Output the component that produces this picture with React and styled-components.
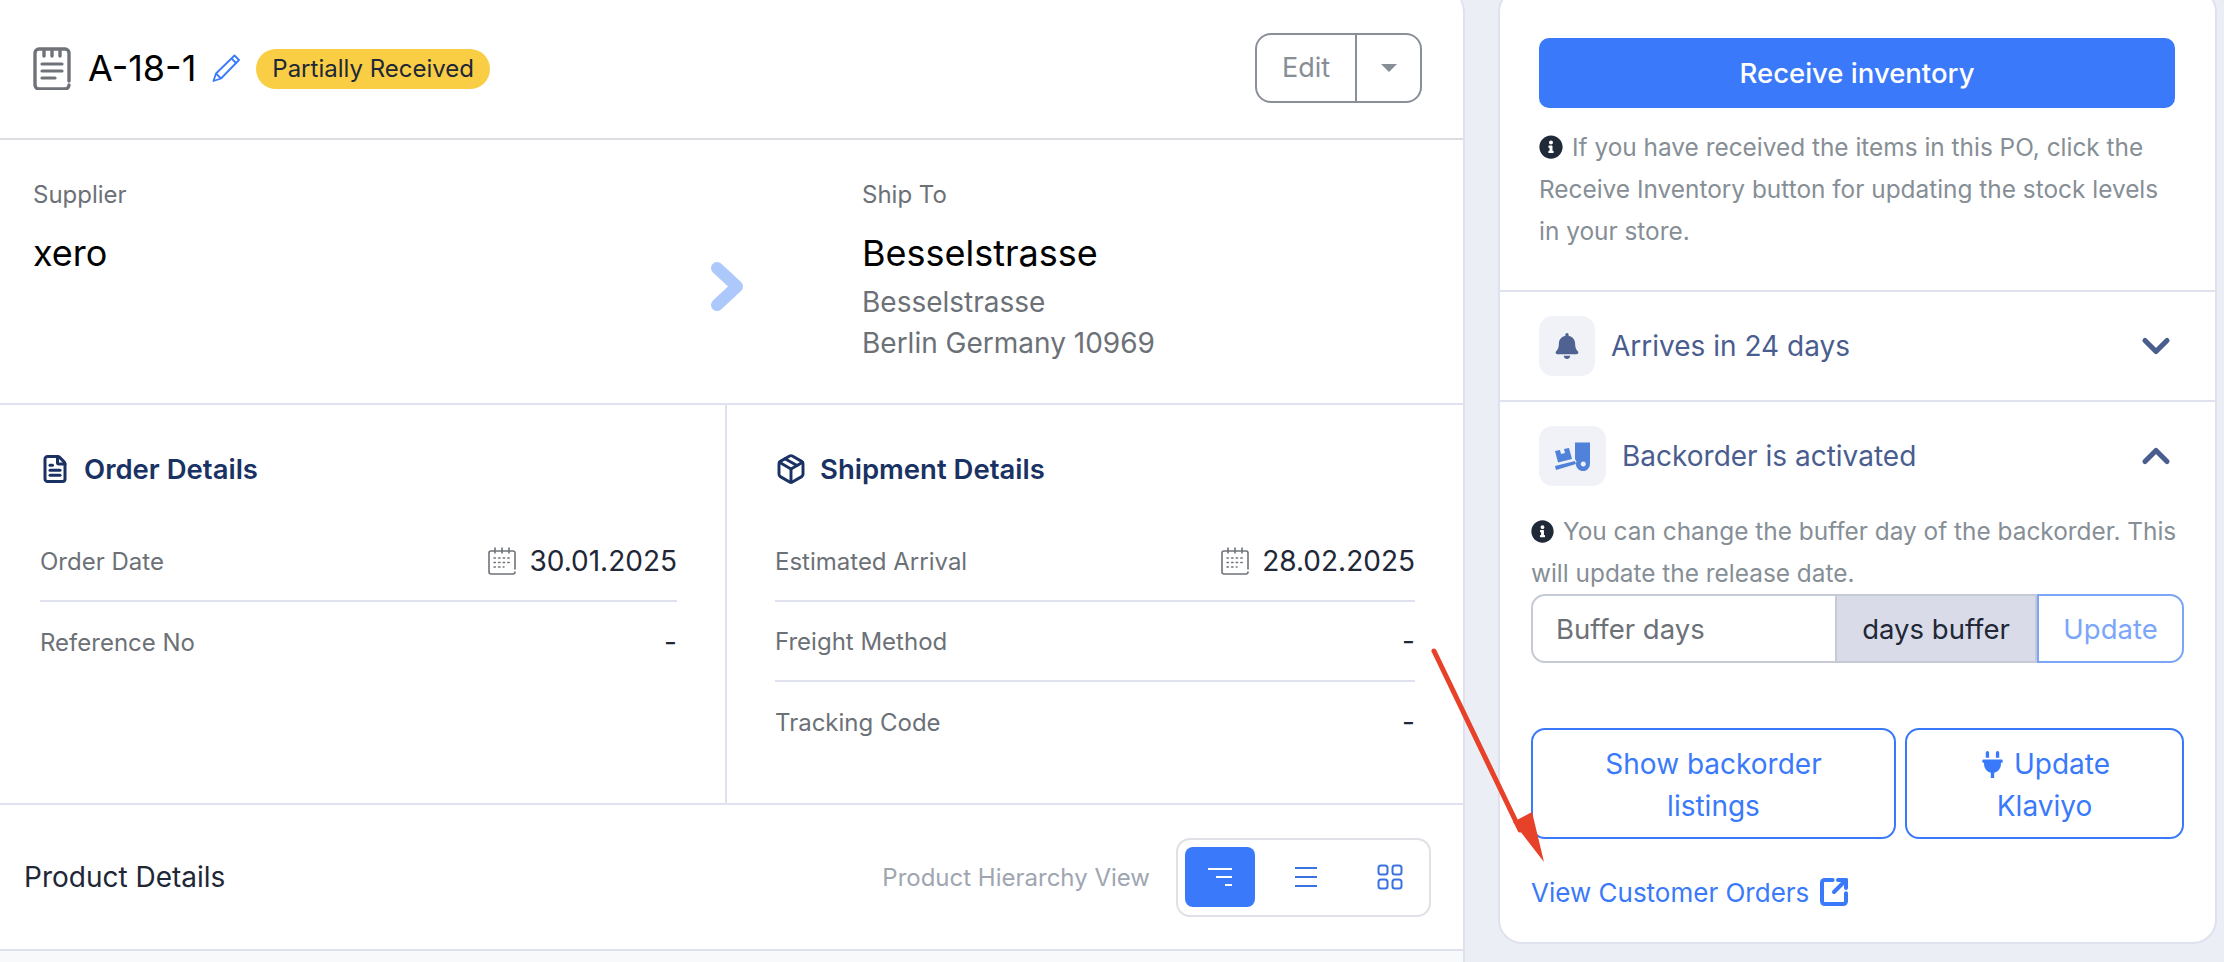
import React from 'react'
import styled, { createGlobalStyle } from 'styled-components'
import { ChevronDown, ChevronUp, FileText, Package, SquareArrowOutUpRight } from 'lucide-react'
import { FaBell, FaInfoCircle, FaPlug } from 'react-icons/fa'

const GlobalStyle = createGlobalStyle`
  html, body { margin: 0; padding: 0; background: #eceef5; }
  * { box-sizing: border-box; }
  body { font-family: Inter, "Liberation Sans", sans-serif; }
`

const Page = styled.div`
  position: relative;
  width: 2224px;
  height: 962px;
  overflow: hidden;
`

const Columns = styled.div`
  display: flex;
  align-items: flex-start;
  gap: 33px;
  margin-top: -12px;
`

const MainCard = styled.section`
  width: 1465px;
  height: 1000px;
  background: #fff;
  border-right: 2px solid #dfe2ee;
  border-top-right-radius: 24px;
`

const Header = styled.header`
  display: flex;
  align-items: center;
  justify-content: space-between;
  height: 152px;
  padding: 9px 41px 0 33px;
  border-bottom: 2px solid #dcdde1;
`

const TitleGroup = styled.div`
  display: flex;
  align-items: center;
`

const Title = styled.h1`
  margin: 0 16px 0 17px;
  font-size: 36px;
  line-height: 44px;
  font-weight: 400;
  color: #000;
`

const Badge = styled.span`
  display: flex;
  align-items: center;
  height: 40px;
  margin: 2px 0 0 16px;
  padding: 0 16px;
  border-radius: 20px;
  background: #f9ce45;
  color: #212736;
  font-size: 24px;
`

const SplitButton = styled.div`
  display: flex;
  width: 167px;
  height: 70px;
  border: 2px solid #8a9099;
  border-radius: 16px;
  color: #868e96;
`

const EditLabel = styled.span`
  display: flex;
  align-items: center;
  justify-content: center;
  width: 100px;
  border-right: 2px solid #8a9099;
  font-size: 27px;
`

const Caret = styled.span`
  flex: 1;
  display: flex;
  align-items: center;
  justify-content: center;
  &::after {
    content: '';
    border-left: 8px solid transparent;
    border-right: 8px solid transparent;
    border-top: 8px solid #868e96;
  }
`

const Parties = styled.div`
  display: grid;
  grid-template-columns: 677px 34px 1fr;
  height: 265px;
  padding: 41px 0 0 33px;
  border-bottom: 2px solid #dfe2ee;
`

const PartyColumn = styled.div`
  padding-left: ${p => p.$inset || 0}px;
`

const PartyLabel = styled.div`
  font-size: 24px;
  line-height: 28px;
  color: #6c7177;
`

const PartyName = styled.div`
  margin: 24px 0 9px;
  font-size: 36px;
  line-height: 40px;
  color: #000;
`

const PartyLine = styled.div`
  font-size: 28px;
  line-height: 41px;
  color: #6c7177;
`

const ArrowMark = styled.svg`
  margin-top: 80px;
  width: 34px;
  height: 51px;
`

const Details = styled.div`
  display: grid;
  grid-template-columns: 727px 1fr;
  height: 400px;
  border-bottom: 2px solid #dfe2ee;
`

const DetailColumn = styled.div`
  padding: 47px ${p => p.$right}px 0 ${p => p.$left}px;
  border-right: ${p => (p.$divided ? '2px solid #dfe2ee' : 'none')};
`

const DetailHeading = styled.h2`
  display: flex;
  align-items: center;
  gap: ${p => p.$gap}px;
  height: 34px;
  margin: 0 0 36px;
  font-size: 27.500px;
  font-weight: 600;
  color: #1a3263;
`

const DetailRow = styled.div`
  display: flex;
  align-items: center;
  justify-content: space-between;
  height: 80px;
  border-bottom: ${p => (p.$last ? 'none' : '2px solid #dfe2ee')};
`

const RowLabel = styled.span`
  font-size: 24px;
  color: #6c7177;
`

const RowValue = styled.span`
  display: flex;
  align-items: center;
  gap: 13px;
  font-size: 28px;
  color: #212736;
`

const ProductBar = styled.div`
  display: flex;
  align-items: center;
  justify-content: space-between;
  height: 146px;
  padding: 0 32px 0 24px;
  border-bottom: 2px solid #dfe2ee;
`

const ProductTitle = styled.span`
  font-size: 28px;
  color: #212736;
`

const ViewControls = styled.div`
  display: flex;
  align-items: center;
  gap: 26px;
`

const ViewLabel = styled.span`
  font-size: 24px;
  color: #a0a6b1;
`

const ViewToggle = styled.div`
  display: flex;
  align-items: center;
  gap: 14px;
  height: 79px;
  padding: 0 6px 0 7px;
  border: 2px solid #dfe1e6;
  border-radius: 14px;
`

const ViewOption = styled.span`
  display: flex;
  align-items: center;
  justify-content: center;
  width: ${p => p.$width}px;
  height: 60px;
  border-radius: 8px;
  background: ${p => (p.$active ? '#3a7afa' : 'transparent')};
  color: ${p => (p.$active ? '#fff' : '#3a72e0')};
`

const ProductFooter = styled.div`
  height: 40px;
  background: #f8f9fb;
`

const SideCard = styled.aside`
  width: 719px;
  height: 956px;
  background: #fff;
  border: 2px solid #dfe2ee;
  border-radius: 24px;
  overflow: hidden;
`

const ReceiveSection = styled.div`
  padding: 48px 40px 38px 39px;
  border-bottom: 2px solid #dfe2ee;
`

const PrimaryButton = styled.div`
  display: flex;
  align-items: center;
  justify-content: center;
  height: 70px;
  margin-bottom: 18px;
  border-radius: 10px;
  background: #3a7afa;
  color: #fff;
  font-size: 27.500px;
  font-weight: 500;
`

const InfoText = styled.p`
  margin: 0;
  font-size: 24.400px;
  line-height: 42px;
  color: #868e96;
  svg {
    margin-right: 9px;
    vertical-align: -3px;
    color: #1f2937;
  }
`

const AccordionHeader = styled.div`
  display: flex;
  align-items: center;
  padding: 24px 37px 24px ${p => p.$inset}px;
  border-bottom: ${p => (p.$divided ? '2px solid #dfe2ee' : 'none')};
`

const AccordionTile = styled.span`
  display: flex;
  align-items: center;
  justify-content: center;
  width: ${p => p.$width}px;
  height: 60px;
  margin-right: 16px;
  border-radius: 14px;
  background: #f0f2f7;
  color: #4f6291;
`

const AccordionTitle = styled.span`
  flex: 1;
  font-size: 28px;
  color: #4a5d8f;
`

const BackorderBody = styled.div`
  padding: 0 31px 33px;
`

const BufferGroup = styled.div`
  display: grid;
  grid-template-columns: 306px 200px 1fr;
  height: 69px;
  margin: 0 0 65px;
  font-size: 27.500px;
`

const BufferCell = styled.div`
  display: flex;
  align-items: center;
  justify-content: ${p => (p.$center ? 'center' : 'flex-start')};
  padding-left: ${p => (p.$center ? 0 : 23)}px;
  border: 2px solid ${p => p.$border};
  border-left-width: ${p => (p.$noLeft ? 0 : 2)}px;
  border-radius: ${p => p.$radius};
  background: ${p => p.$bg};
  color: ${p => p.$color};
`

const ActionRow = styled.div`
  display: grid;
  grid-template-columns: 365px 279px;
  gap: 9px;
  margin-bottom: 36px;
`

const OutlineButton = styled.div`
  height: 111px;
  padding-top: 13px;
  border: 2px solid #3a7afa;
  border-radius: 14px;
  color: #3a7afa;
  font-size: 28px;
  line-height: 42px;
  text-align: center;
  svg { vertical-align: -4px; margin-right: 8px; }
`

const CustomerLink = styled.div`
  display: flex;
  align-items: center;
  gap: 9px;
  height: 34px;
  color: #3a7afa;
  font-size: 26px;
`

const AnnotationArrow = styled.svg`
  position: absolute;
  left: 1420px;
  top: 640px;
  width: 140px;
  height: 235px;
`

const NotepadIcon = () => (
  <svg width="38" height="44" viewBox="0 0 38 44" fill="none" stroke="#6f7379" strokeWidth="3.4" strokeLinecap="round">
    <path d="M36 35V7a4 4 0 0 0-4-4H6a4 4 0 0 0-4 4v32a4 4 0 0 0 4 4h26a4 4 0 0 0 4-4" />
    <path d="M11 5v5M19 5v5M27 5v5" strokeWidth="3.4" />
    <path d="M9 18h20M9 25h20M9 32h13" strokeWidth="3.2" />
  </svg>
)

const PencilIcon = () => (
  <svg width="28" height="28" viewBox="0 0 28 28" fill="none" stroke="#3a7afa" strokeWidth="1.8" strokeLinejoin="round">
    <path d="M22.500 1.500 27 6 9 24.500 1.500 27 4 19.500z" />
    <path d="M19.500 4.500 24 9M4 19.500 9 24.500" />
  </svg>
)

const CalendarIcon = () => (
  <svg width="28" height="28" viewBox="0 0 28 28" fill="none" stroke="#6f7379" strokeWidth="1.6" strokeLinecap="round">
    <path d="M27 22V6a2 2 0 0 0-2-2H3a2 2 0 0 0-2 2v19a2 2 0 0 0 2 2h22a2 2 0 0 0 2-2" />
    <path d="M7 1v5M14 1v5M21 1v5" />
    <path d="M6 11h16M6 15.500h16M6 20h10" strokeDasharray="1.4 3.2" strokeWidth="1.500" />
  </svg>
)

const HierarchyIcon = () => (
  <svg width="26" height="22" viewBox="0 0 26 22" stroke="currentColor" strokeWidth="2">
    <path d="M1 3h24M9 11h16M18 19h7" />
  </svg>
)

const ListIcon = () => (
  <svg width="24" height="22" viewBox="0 0 24 22" stroke="currentColor" strokeWidth="2">
    <path d="M1 2h22M1 11h22M1 20h22" />
  </svg>
)

const GridIcon = () => (
  <svg width="26" height="26" viewBox="0 0 26 26" fill="none" stroke="currentColor" strokeWidth="2">
    <rect x="1.500" y="1.500" width="9" height="9" rx="2.500" />
    <rect x="15.500" y="1.500" width="9" height="9" rx="2.500" />
    <rect x="1.500" y="15.500" width="9" height="9" rx="2.500" />
    <rect x="15.500" y="15.500" width="9" height="9" rx="2.500" />
  </svg>
)

const BackorderIcon = () => (
  <svg width="36" height="29" viewBox="0 0 36 29" fill="#4f82d8">
    <path d="M20 .5H35V22a7 7 0 1 1-13.500-2.500L20 17zM28.300 19.500a2.500 2.500 0 1 0 .01 0z" fillRule="evenodd" />
    <path d="M0 9 5 8l1 4 4-1-1-4 5-1 3 11-14 3.500z" />
    <path d="M0 24 20 19l1 3L1 28z" />
  </svg>
)

const DetailLine = ({ label, date, last }) => (
  <DetailRow $last={last}>
    <RowLabel>{label}</RowLabel>
    {date ? (
      <RowValue>
        <CalendarIcon />
        {date}
      </RowValue>
    ) : (
      <RowValue>-</RowValue>
    )}
  </DetailRow>
)

export default function App() {
  return (
    <Page>
      <GlobalStyle />
      <Columns>
        <MainCard>
          <Header>
            <TitleGroup>
              <NotepadIcon />
              <Title>A-18-1</Title>
              <PencilIcon />
              <Badge>Partially Received</Badge>
            </TitleGroup>
            <SplitButton>
              <EditLabel>Edit</EditLabel>
              <Caret />
            </SplitButton>
          </Header>

          <Parties>
            <PartyColumn>
              <PartyLabel>Supplier</PartyLabel>
              <PartyName>xero</PartyName>
            </PartyColumn>
            <ArrowMark viewBox="0 0 34 51" fill="none" stroke="#adc8fb" strokeWidth="12" strokeLinecap="round" strokeLinejoin="round">
              <path d="M7 7 27 25.500 7 44" />
            </ArrowMark>
            <PartyColumn $inset={118}>
              <PartyLabel>Ship To</PartyLabel>
              <PartyName>Besselstrasse</PartyName>
              <PartyLine>Besselstrasse</PartyLine>
              <PartyLine>Berlin Germany 10969</PartyLine>
            </PartyColumn>
          </Parties>

          <Details>
            <DetailColumn $left={40} $right={48} $divided>
              <DetailHeading $gap={14}>
                <FileText size={30} strokeWidth={2.4} />
                Order Details
              </DetailHeading>
              <DetailLine label="Order Date" date="30.01.2025" />
              <DetailLine label="Reference No" last />
            </DetailColumn>
            <DetailColumn $left={48} $right={48}>
              <DetailHeading $gap={13}>
                <Package size={32} strokeWidth={2.2} />
                Shipment Details
              </DetailHeading>
              <DetailLine label="Estimated Arrival" date="28.02.2025" />
              <DetailLine label="Freight Method" />
              <DetailLine label="Tracking Code" last />
            </DetailColumn>
          </Details>

          <ProductBar>
            <ProductTitle>Product Details</ProductTitle>
            <ViewControls>
              <ViewLabel>Product Hierarchy View</ViewLabel>
              <ViewToggle>
                <ViewOption $active $width={70}><HierarchyIcon /></ViewOption>
                <ViewOption $width={74}><ListIcon /></ViewOption>
                <ViewOption $width={66}><GridIcon /></ViewOption>
              </ViewToggle>
            </ViewControls>
          </ProductBar>
          <ProductFooter />
        </MainCard>

        <SideCard>
          <ReceiveSection>
            <PrimaryButton>Receive inventory</PrimaryButton>
            <InfoText>
              <FaInfoCircle size={24} />
              If you have received the items in this PO, click the Receive Inventory button for updating the stock levels in your store.
            </InfoText>
          </ReceiveSection>

          <AccordionHeader $inset={39} $divided>
            <AccordionTile $width={56}><FaBell size={26} /></AccordionTile>
            <AccordionTitle>Arrives in 24 days</AccordionTitle>
            <ChevronDown size={44} strokeWidth={2.8} color="#4a5d8f" />
          </AccordionHeader>

          <AccordionHeader $inset={39}>
            <AccordionTile $width={67}><BackorderIcon /></AccordionTile>
            <AccordionTitle>Backorder is activated</AccordionTitle>
            <ChevronUp size={44} strokeWidth={2.8} color="#4a5d8f" />
          </AccordionHeader>

          <BackorderBody>
            <InfoText>
              <FaInfoCircle size={23} />
              You can change the buffer day of the backorder. This will update the release date.
            </InfoText>
            <BufferGroup>
              <BufferCell $border="#c6cad4" $radius="14px 0 0 14px" $bg="#fff" $color="#6c7177">Buffer days</BufferCell>
              <BufferCell $center $noLeft $border="#c6cad4" $radius="0" $bg="#d9dce8" $color="#212736">days buffer</BufferCell>
              <BufferCell $center $border="#7aa5f8" $radius="0 14px 14px 0" $bg="#fff" $color="#7ba6fa">Update</BufferCell>
            </BufferGroup>
            <ActionRow>
              <OutlineButton>Show backorder<br />listings</OutlineButton>
              <OutlineButton><FaPlug size={27} />Update<br />Klaviyo</OutlineButton>
            </ActionRow>
            <CustomerLink>
              View Customer Orders
              <SquareArrowOutUpRight size={32} strokeWidth={3} />
            </CustomerLink>
          </BackorderBody>
        </SideCard>
      </Columns>

      <AnnotationArrow viewBox="0 0 140 235" fill="#e8412a">
        <path d="M14 11 100 190" stroke="#e8412a" strokeWidth="5" strokeLinecap="round" fill="none" />
        <path d="M124 222 93 182 112 172z" />
      </AnnotationArrow>
    </Page>
  )
}
